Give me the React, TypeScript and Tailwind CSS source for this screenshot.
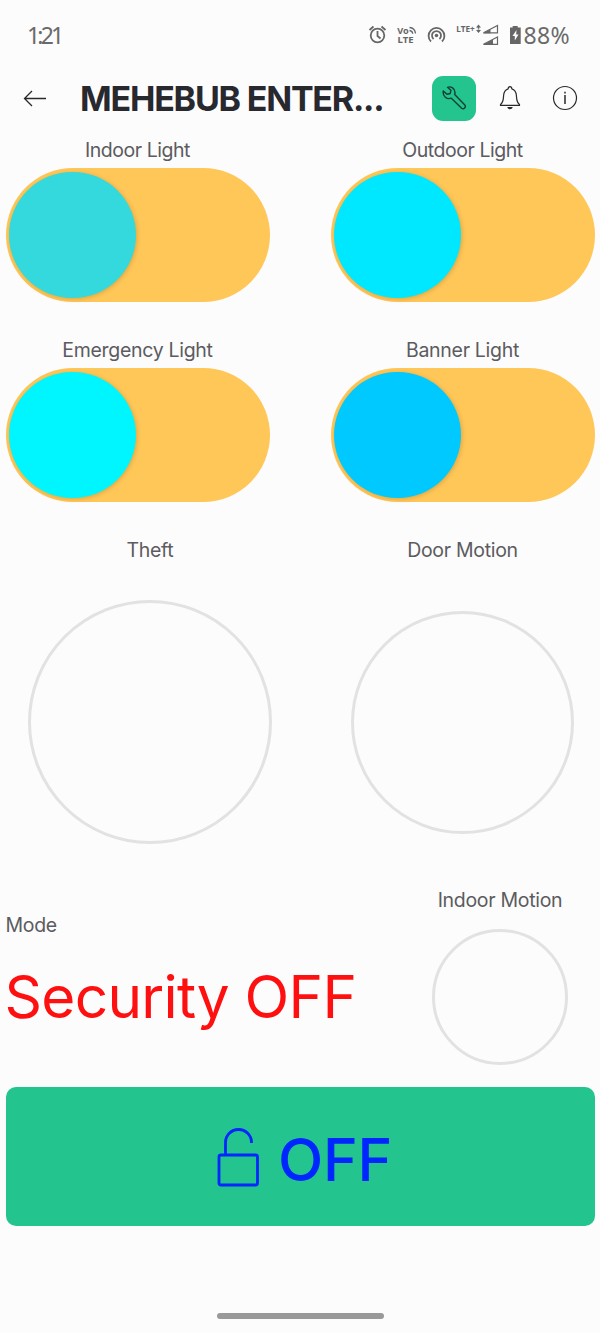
import type { ReactNode } from "react";

function StatusBar() {
  return (
    <div className="flex h-[70px] items-start pl-[27px] pt-[20px] text-[#6a6a6a]">
      <span className="w-[341px] font-['Noto_Sans'] text-[23px] font-normal leading-[30px] tracking-[-2.8px]">1:21</span>
      <svg className="h-[30px] w-[142px] shrink-0" viewBox="368 20 142 30" fill="none" stroke="#666" strokeWidth="1.8">
        <circle cx="377.5" cy="35.5" r="6.8" />
        <path d="M377.5 31v5l3 2.5M369.5 30l4-3.5M385.500 30l-4-3.500" />
        <text x="397.300" y="33.500" fontSize="8.500" fontWeight="700" fontFamily="Noto Sans, sans-serif" fill="#666" stroke="none" textLength="11.500" lengthAdjust="spacingAndGlyphs">Vo</text>
        <text x="397.500" y="43" fontSize="9.500" fontWeight="700" fontFamily="Noto Sans, sans-serif" fill="#666" stroke="none" textLength="16" lengthAdjust="spacingAndGlyphs">LTE</text>
        <path strokeWidth="1.300" d="M409.500 27.500q5.500.5 6 6M409.500 30.500q3 .5 3.200 3.200" />
        <circle cx="436.500" cy="35.500" r="1.800" fill="#666" stroke="none" />
        <path d="M431 41.500a7.900 7.900 0 1 1 11 0M433.600 39a4.500 4.500 0 1 1 5.800 0" />
        <text x="456.300" y="31.500" fontSize="8" fontWeight="700" fontFamily="Noto Sans, sans-serif" fill="#666" stroke="none" textLength="18.500" lengthAdjust="spacingAndGlyphs">LTE+</text>
        <path d="m478.500 24.500 2.500 3h-1.700v1.300h-1.600v-1.300H476zM478.500 33l2.500-3h-1.700v-.6h-1.600v.6H476z" fill="#666" stroke="none" />
        <path strokeWidth="1.200" d="M483.500 32.800 497.500 25.500v7.300zM483.500 44.300 497.500 37v7.300z" />
        <path fill="#666" stroke="none" d="M483 33.200l7.500-4v4zM483 44.800l10-5.400v5.400z" />
      </svg>
      <svg className="h-[30px] w-[12px] shrink-0" viewBox="510 20 12 30">
        <path fill="#666" d="M512.700 26h5v1.500h3v16.500h-10.700v-16.500h2.700z" />
        <path fill="#fcfcfc" d="m516.500 30-4 6h2.300v4.500l3.700-6h-2.300z" />
      </svg>
      <span className="ml-[1.500px] font-['Noto_Sans'] text-[23px] font-normal leading-[30px] tracking-[0.4px]">88%</span>
    </div>
  );
}

function Header() {
  return (
    <div className="flex h-[56px] items-center pl-[23px] text-[#28282f]">
      <svg className="h-[24px] w-[24px] shrink-0" viewBox="0 0 24 24" fill="none" stroke="currentColor" strokeWidth="1.300">
        <path d="M23 12.500H1.500M9 5 1.500 12.500 9 20" />
      </svg>
      <h1 className="ml-[33px] mt-[2px] w-[352px] whitespace-nowrap font-['Inter'] text-[34px] font-bold leading-[44px] tracking-[-1.200px]">MEHEBUB ENTER...</h1>
      <button className="flex h-[45px] w-[44px] shrink-0 items-center justify-center rounded-[11px] bg-[#24c48e]">
        <svg className="h-[26px] w-[26px]" viewBox="0 0 26 26" fill="none" stroke="#123f35" strokeWidth="1.400" strokeLinejoin="round">
          <path d="M6.500 2.300C10 1 14 3.300 14 7.300c0 .8-.1 1.500-.3 2.200l9.900 10.300c2 2.300-.9 5.200-3.200 3.200L10.300 13.200C6 14.700 1.300 11.500 2.300 5.900L6 9.300l3.200-.8.700-3.200z" />
        </svg>
      </button>
      <svg className="ml-[23px] h-[26px] w-[22px] shrink-0" viewBox="0 0 22 26" fill="none" stroke="currentColor" strokeWidth="1.200" strokeLinejoin="round">
        <path d="M1.500 19.500c3-2 2.800-5 3.100-9C4.900 6.800 6.700 4.500 9.200 3.800c.1-3 3.500-3 3.600 0 2.500.7 4.300 3 4.600 6.700.3 4 .1 7 3.100 9v.9h-19z" />
        <path fill="currentColor" stroke="none" d="M8.300 22h5.400c-.6 3-4.800 3-5.400 0z" />
      </svg>
      <svg className="ml-[31px] h-[26px] w-[26px] shrink-0" viewBox="0 0 26 26" fill="none" stroke="currentColor" strokeWidth="1.200">
        <circle cx="13" cy="13" r="11.500" />
        <path strokeWidth="1.500" d="M13 10v9M13 6.700v1.800" />
      </svg>
    </div>
  );
}

function Label({ children, spacing = "tracking-[-0.3px]" }: { children: ReactNode; spacing?: string }) {
  return <div className={`whitespace-nowrap font-['Inter'] text-[19.5px] leading-[30px] text-[#5b5b60] ${spacing}`}>{children}</div>;
}

function Toggle({ label, knob, spacing }: { label: string; knob: string; spacing?: string }) {
  return (
    <div className="flex h-[200px] w-[264px] flex-col items-center">
      <Label spacing={spacing}>{label}</Label>
      <div className="mt-[3px] h-[134px] w-[264px] rounded-full bg-[#ffc658] p-[3.500px]">
        <div className={`size-[126.500px] rounded-full shadow-[1px_1px_4px_rgba(120,80,0,0.25)] ${knob}`} />
      </div>
    </div>
  );
}

export default function App() {
  return (
    <div className="flex h-[1333px] w-[600px] flex-col overflow-hidden bg-[#fcfcfc]">
      <StatusBar />
      <Header />
      <div className="mt-[9px] grid grid-cols-[264px_264px] justify-between px-[5.5px]">
        <Toggle label="Indoor Light" knob="bg-[#33d9dd]" spacing="tracking-[-0.45px]" />
        <Toggle label="Outdoor Light" knob="bg-[#00e8ff]" spacing="tracking-[-0.45px]" />
        <Toggle label="Emergency Light" knob="bg-[#00f6ff]" />
        <Toggle label="Banner Light" knob="bg-[#00c9ff]" />
      </div>
      <div className="flex h-[350px] px-[28px]">
        <div className="flex w-[244px] flex-col items-center">
          <Label>Theft</Label>
          <div className="mt-[35px] size-[244px] rounded-full border-[3px] border-[#e2e2e2]" />
        </div>
        <div className="ml-[79px] flex w-[223px] flex-col items-center">
          <Label>Door Motion</Label>
          <div className="mt-[45.500px] size-[223px] rounded-full border-[3px] border-[#e2e2e2]" />
        </div>
      </div>
      <div className="flex h-[202px] pl-[5.5px]">
        <div className="w-[426.5px] pt-[25px]">
          <Label>Mode</Label>
          <div className="-ml-px mt-[22px] whitespace-nowrap font-['Inter'] text-[58.5px] leading-[70px] tracking-[-0.7px] text-[#ff1010]">Security OFF</div>
        </div>
        <div className="flex w-[136px] flex-col items-center">
          <Label>Indoor Motion</Label>
          <div className="mt-[14px] size-[136px] rounded-full border-[3px] border-[#e2e2e2]" />
        </div>
      </div>
      <button className="mx-[5.5px] mt-[.4px] flex h-[139px] shrink-0 items-center rounded-[10px] bg-[#24c48e] pl-[211.500px] text-[#0026ff]">
        <svg className="h-[60px] w-[42px]" viewBox="0 0 42 60" fill="none" stroke="currentColor" strokeWidth="2.800">
          <rect x="2" y="28" width="38.500" height="30" rx="2" />
          <path d="M8.500 28V15.500a13 13 0 0 1 26 0v.5" />
        </svg>
        <span className="ml-[19px] mt-[7px] font-['Inter'] text-[59px] font-medium leading-[70px] tracking-[-0.2px]">OFF</span>
      </button>
      <div className="mx-auto mt-[86.500px] h-[6px] w-[167px] shrink-0 rounded-full bg-[#999999]" />
    </div>
  );
}
